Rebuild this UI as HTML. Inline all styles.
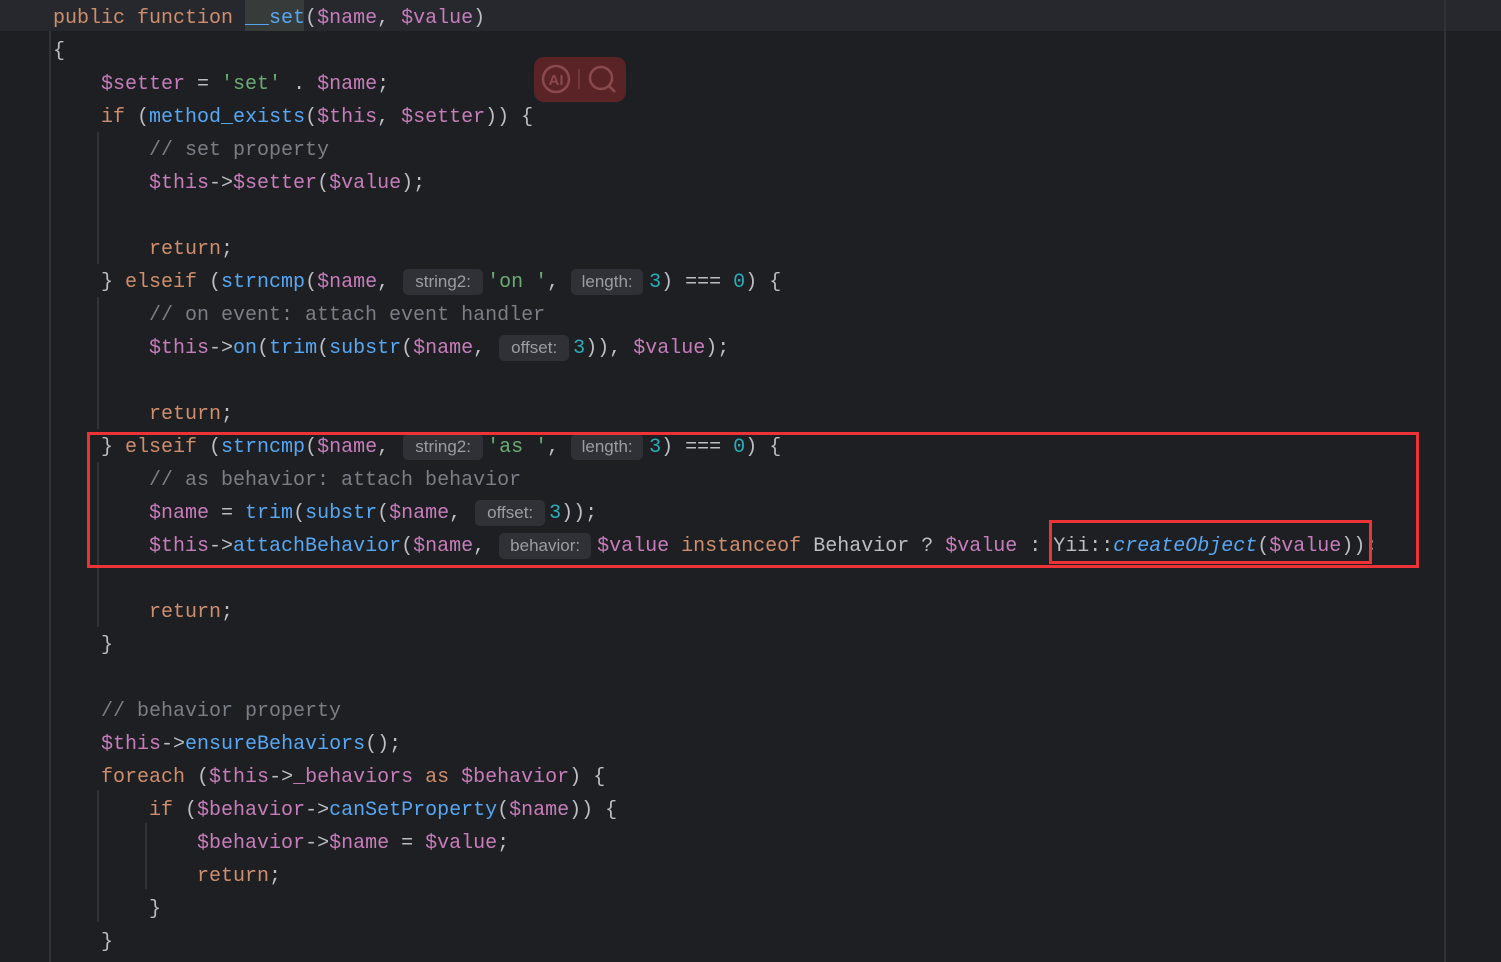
<!DOCTYPE html>
<html><head><meta charset="utf-8"><style>
*{margin:0;padding:0;box-sizing:border-box}
body{width:1501px;height:962px;background:#1e1f22;position:relative;overflow:hidden;font-family:"Liberation Mono",monospace;font-size:20px;color:#bcbec4}
.l{position:absolute;left:53px;height:33px;line-height:33px;white-space:pre;margin-top:2px}
.k{color:#cf8e6d}.v{color:#c77dbb}.f{color:#56a8f5}.s{color:#6aab73}.n{color:#2aacb8}.c{color:#7a7e85}
.i{font-style:italic}
.h{display:inline-block;height:26px;line-height:26px;vertical-align:middle;margin-top:-6px;background:#2f3136;color:#9a9da2;border-radius:5px;font-family:"Liberation Sans",sans-serif;font-size:17px;text-align:center}
.g{position:absolute;width:2px;background:#313338}
</style></head><body>
<div style="position:absolute;left:0;top:0;width:1501px;height:31px;background:#26282e"></div>
<div style="position:absolute;left:245px;top:0;width:59px;height:31px;background:#373b39"></div>
<div style="position:absolute;left:1444px;top:0;width:2px;height:962px;background:#2f3136"></div>
<div class="g" style="left:49px;top:31px;height:931px"></div>
<div class="g" style="left:97px;top:132px;height:132px"></div>
<div class="g" style="left:97px;top:297px;height:132px"></div>
<div class="g" style="left:97px;top:462px;height:165px"></div>
<div class="g" style="left:97px;top:790px;height:132px"></div>
<div class="g" style="left:145px;top:823px;height:66px"></div>

<div class="l" style="top:0"><span class="k">public function </span><span class="f">__set</span>(<span class="v">$name</span>, <span class="v">$value</span>)</div>
<div class="l" style="top:33px">{</div>
<div class="l" style="top:66px">    <span class="v">$setter</span> = <span class="s">'set'</span> . <span class="v">$name</span>;</div>
<div class="l" style="top:99px">    <span class="k">if</span> (<span class="f">method_exists</span>(<span class="v">$this</span>, <span class="v">$setter</span>)) {</div>
<div class="l" style="top:132px">        <span class="c">// set property</span></div>
<div class="l" style="top:165px">        <span class="v">$this</span>-&gt;<span class="v">$setter</span>(<span class="v">$value</span>);</div>
<div class="l" style="top:231px">        <span class="k">return</span>;</div>
<div class="l" style="top:264px">    } <span class="k">elseif</span> (<span class="f">strncmp</span>(<span class="v">$name</span>, <span class="h" style="width:80px;margin:0 4px 0 2px">string2:</span><span class="s">'on '</span>, <span class="h" style="width:72px;margin:0 6px 0 0">length:</span><span class="n">3</span>) === <span class="n">0</span>) {</div>
<div class="l" style="top:297px">        <span class="c">// on event: attach event handler</span></div>
<div class="l" style="top:330px">        <span class="v">$this</span>-&gt;<span class="f">on</span>(<span class="f">trim</span>(<span class="f">substr</span>(<span class="v">$name</span>, <span class="h" style="width:70px;margin:0 4px 0 2px">offset:</span><span class="n">3</span>)), <span class="v">$value</span>);</div>
<div class="l" style="top:396px">        <span class="k">return</span>;</div>
<div class="l" style="top:429px">    } <span class="k">elseif</span> (<span class="f">strncmp</span>(<span class="v">$name</span>, <span class="h" style="width:80px;margin:0 4px 0 2px">string2:</span><span class="s">'as '</span>, <span class="h" style="width:72px;margin:0 6px 0 0">length:</span><span class="n">3</span>) === <span class="n">0</span>) {</div>
<div class="l" style="top:462px">        <span class="c">// as behavior: attach behavior</span></div>
<div class="l" style="top:495px">        <span class="v">$name</span> = <span class="f">trim</span>(<span class="f">substr</span>(<span class="v">$name</span>, <span class="h" style="width:70px;margin:0 4px 0 2px">offset:</span><span class="n">3</span>));</div>
<div class="l" style="top:528px">        <span class="v">$this</span>-&gt;<span class="f">attachBehavior</span>(<span class="v">$name</span>, <span class="h" style="width:92px;margin:0 6px 0 2px">behavior:</span><span class="v">$value</span> <span class="k">instanceof</span> Behavior ? <span class="v">$value</span> : Yii::<span class="f i">createObject</span>(<span class="v">$value</span>));</div>
<div class="l" style="top:594px">        <span class="k">return</span>;</div>
<div class="l" style="top:627px">    }</div>
<div class="l" style="top:693px">    <span class="c">// behavior property</span></div>
<div class="l" style="top:726px">    <span class="v">$this</span>-&gt;<span class="f">ensureBehaviors</span>();</div>
<div class="l" style="top:759px">    <span class="k">foreach</span> (<span class="v">$this</span>-&gt;<span class="v">_behaviors</span> <span class="k">as</span> <span class="v">$behavior</span>) {</div>
<div class="l" style="top:792px">        <span class="k">if</span> (<span class="v">$behavior</span>-&gt;<span class="f">canSetProperty</span>(<span class="v">$name</span>)) {</div>
<div class="l" style="top:825px">            <span class="v">$behavior</span>-&gt;<span class="v">$name</span> = <span class="v">$value</span>;</div>
<div class="l" style="top:858px">            <span class="k">return</span>;</div>
<div class="l" style="top:891px">        }</div>
<div class="l" style="top:924px">    }</div>

<div style="position:absolute;left:87px;top:432px;width:1332px;height:136px;border:3px solid #ee3336"></div>
<div style="position:absolute;left:1049px;top:520px;width:323px;height:44px;border:3px solid #ee3336"></div>

<div style="position:absolute;left:534px;top:57px;width:92px;height:45px;background:#5a2427;border-radius:10px"></div>
<svg style="position:absolute;left:534px;top:57px" width="92" height="45" viewBox="0 0 92 45">
<circle cx="22" cy="22" r="13" fill="none" stroke="#8a4a4c" stroke-width="2.5"/>
<text x="22" y="28" font-family="Liberation Sans,sans-serif" font-size="15" font-weight="bold" fill="#8a4a4c" text-anchor="middle">AI</text>
<line x1="45" y1="12" x2="45" y2="32" stroke="#7a3e40" stroke-width="1.5"/>
<circle cx="67" cy="21" r="11" fill="none" stroke="#8a4a4c" stroke-width="2.5"/>
<line x1="75" y1="29" x2="81" y2="35" stroke="#8a4a4c" stroke-width="2.5"/>
</svg>
</body></html>
